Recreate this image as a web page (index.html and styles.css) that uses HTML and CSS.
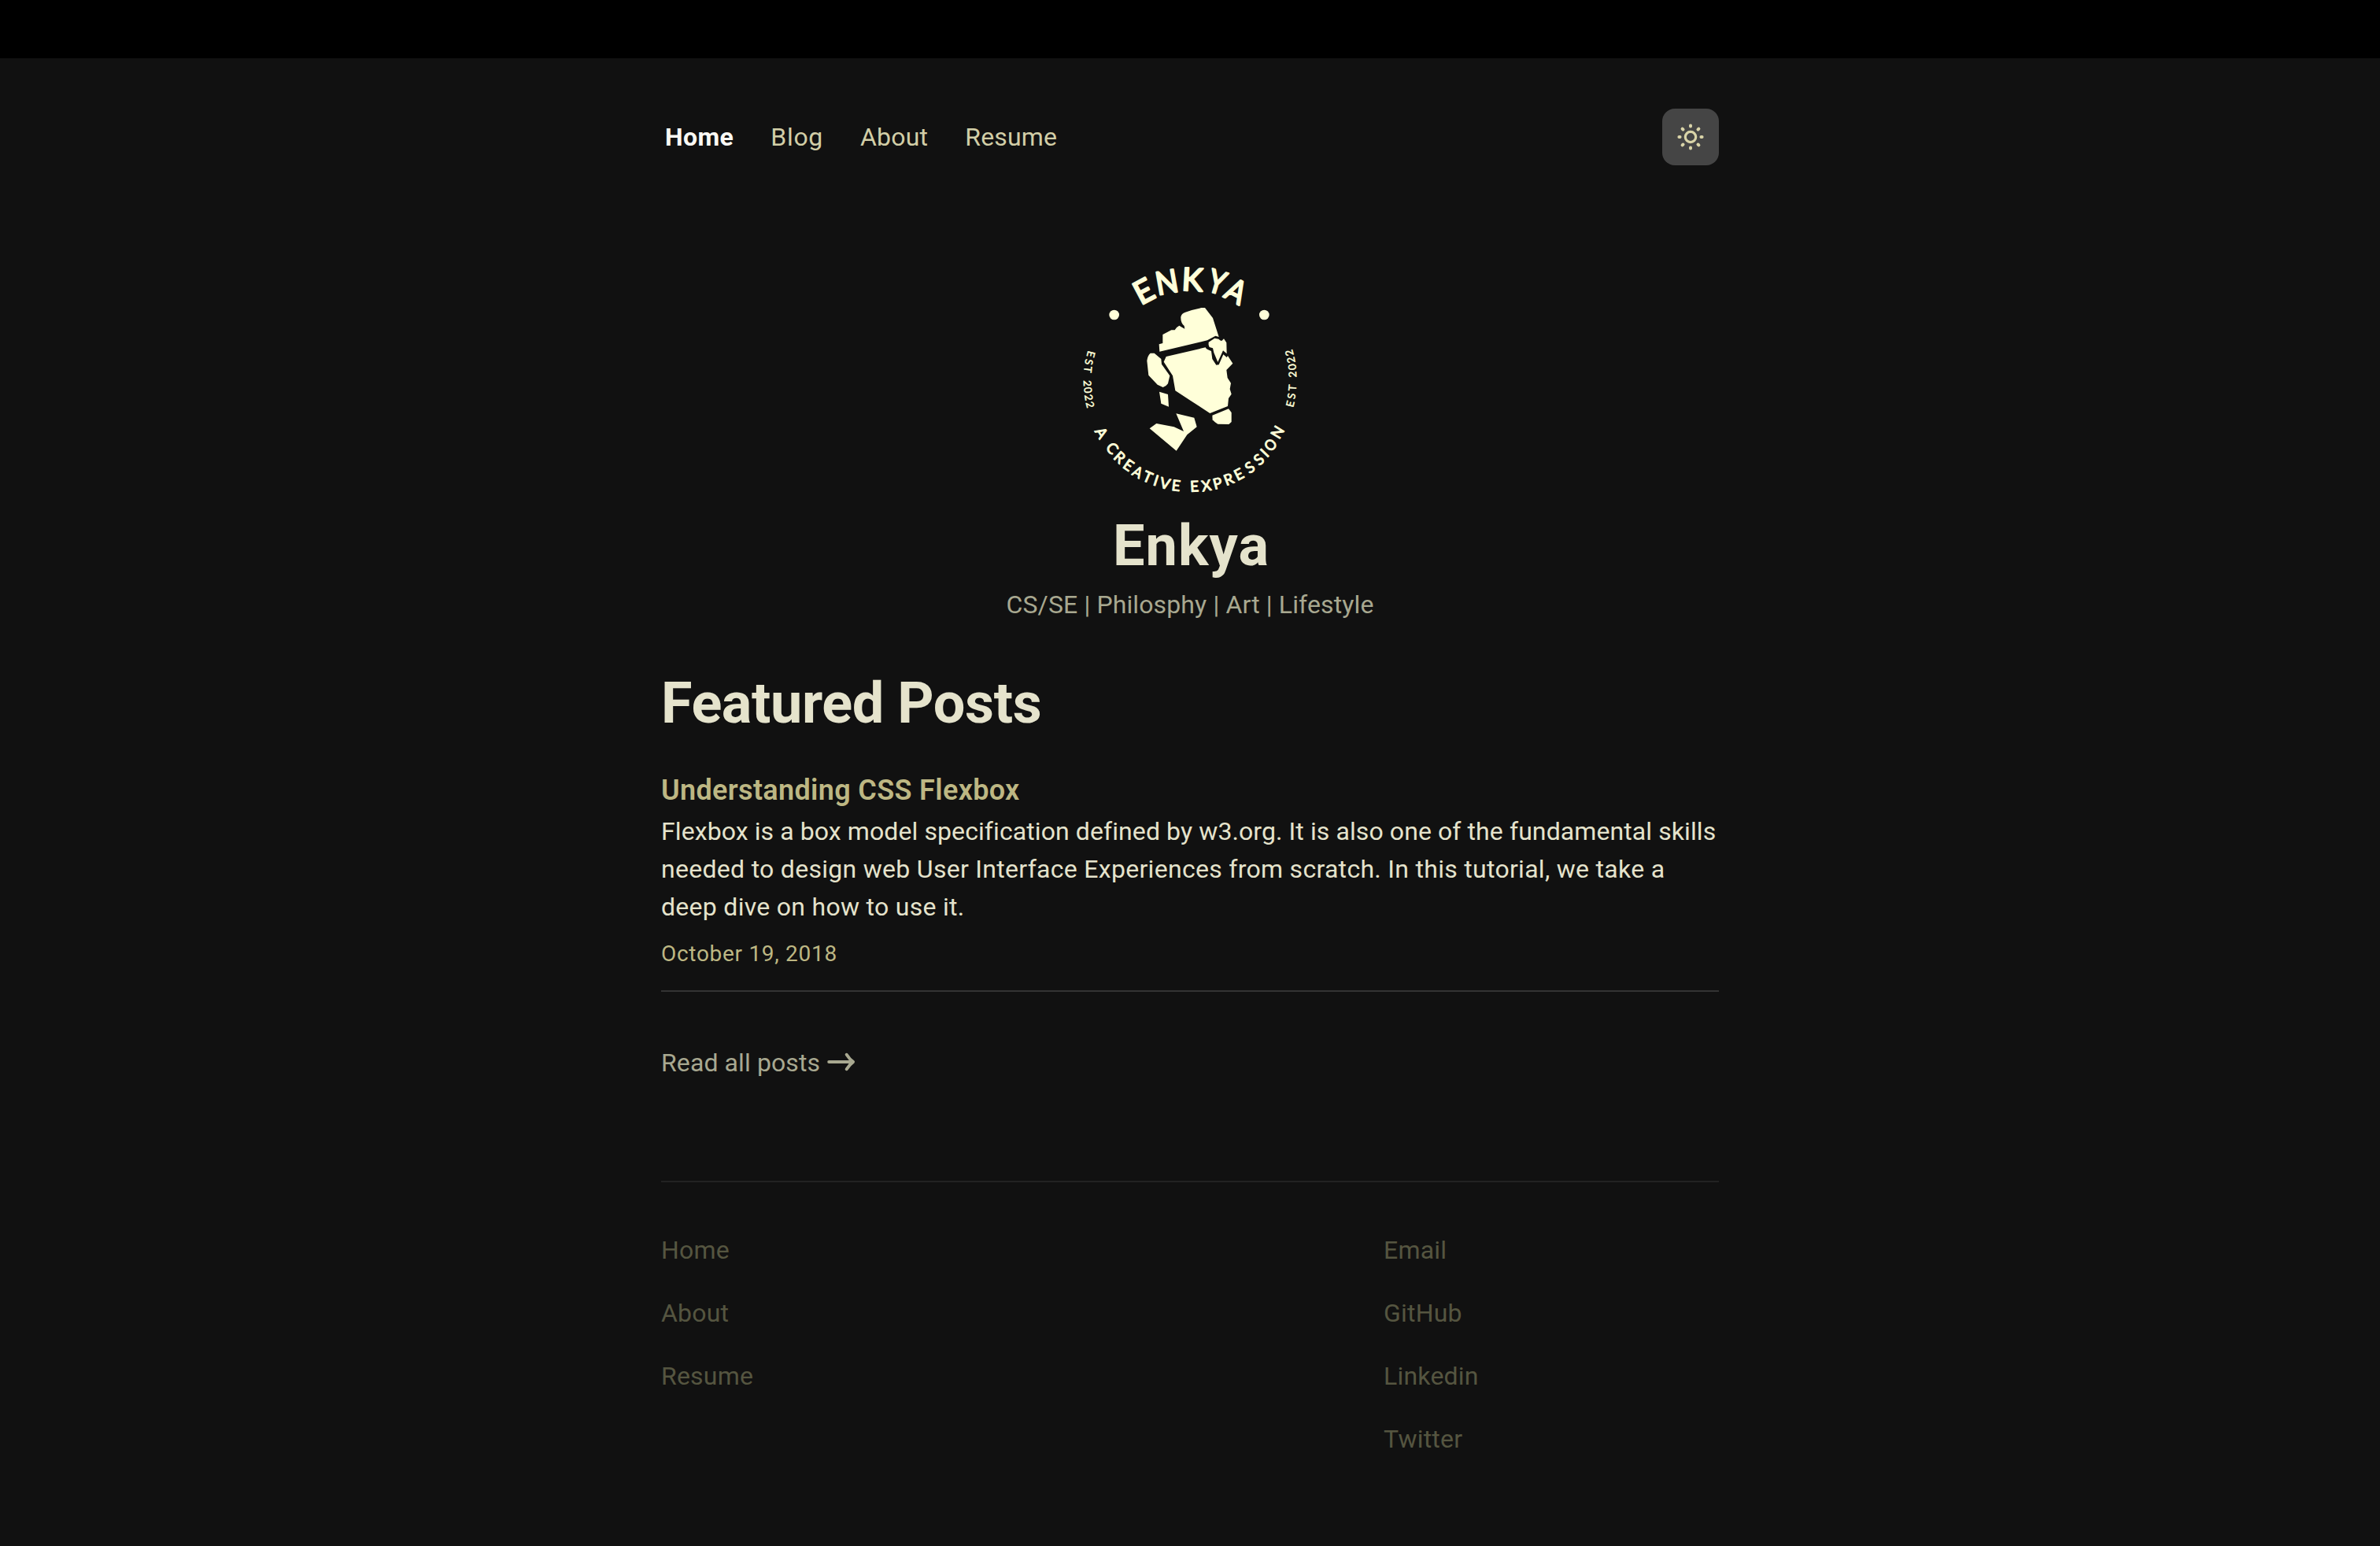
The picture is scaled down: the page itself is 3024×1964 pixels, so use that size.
FILE: index.html
```
<!DOCTYPE html>
<html lang="en">
<head>
<meta charset="utf-8">
<title>Enkya</title>
<link rel="stylesheet" href="styles.css">
</head>
<body>
<div class="topbar"></div>
<div class="page">
  <header class="header">
    <nav class="nav">
      <a class="nav-link active">Home</a>
      <a class="nav-link blog">Blog</a>
      <a class="nav-link about">About</a>
      <a class="nav-link">Resume</a>
    </nav>
    <button class="theme-toggle" aria-label="Toggle theme">
      <svg class="sun" viewBox="0 0 36 36">
        <circle cx="18" cy="18" r="6.7" stroke-width="3.2"/>
        <path d="M18 3.4v1.2M18 31.4v1.2M3.4 18h1.2M31.4 18h1.2M7.6 7.6l.9.9M27.5 27.5l.9.9M7.6 28.4l.9-.9M27.5 8.5l.9-.9" stroke-width="4" stroke-linecap="round"/>
      </svg>
    </button>
  </header>

  <main>
    <section class="hero">
      <svg class="logo" viewBox="-9 0 930 960">
        <g class="mark-name">
          <text transform="translate(279 149) rotate(-28)" dy=".36em">E</text>
          <text transform="translate(367 115) rotate(-10) scale(.92 1)" dy=".36em">N</text>
          <text transform="translate(465 105) rotate(3)" dy=".36em">K</text>
          <text transform="translate(560 114) rotate(17) scale(.86 1)" dy=".36em">Y</text>
          <text transform="translate(633 149) rotate(28) scale(.88 1)" dy=".36em">A</text>
        </g>
        <circle cx="167" cy="240" r="19"/>
        <circle cx="739" cy="240" r="19"/>
        <g class="mark-est">
          <text transform="translate(79 390) rotate(104)" dy=".36em">E</text>
          <text transform="translate(71 420) rotate(100)" dy=".36em">S</text>
          <text transform="translate(67 448) rotate(96)" dy=".36em">T</text>
          <text transform="translate(65 501) rotate(88)" dy=".36em">2</text>
          <text transform="translate(67 527) rotate(84)" dy=".36em">0</text>
          <text transform="translate(70 555) rotate(80)" dy=".36em">2</text>
          <text transform="translate(75 582) rotate(76)" dy=".36em">2</text>
          <text transform="translate(838 579) rotate(-76)" dy=".36em">E</text>
          <text transform="translate(843 549) rotate(-80)" dy=".36em">S</text>
          <text transform="translate(846 518) rotate(-85)" dy=".36em">T</text>
          <text transform="translate(847 467) rotate(-93)" dy=".36em">2</text>
          <text transform="translate(845 439) rotate(-97)" dy=".36em">0</text>
          <text transform="translate(841 412) rotate(-101)" dy=".36em">2</text>
          <text transform="translate(834 385) rotate(-105)" dy=".36em">2</text>
        </g>
        <g class="mark-motto">
          <text transform="translate(119 689) rotate(59)" dy=".36em">A</text>
          <text transform="translate(160 748) rotate(48)" dy=".36em">C</text>
          <text transform="translate(188 783) rotate(42)" dy=".36em">R</text>
          <text transform="translate(222 812) rotate(35)" dy=".36em">E</text>
          <text transform="translate(257 839) rotate(29) scale(.9 1)" dy=".36em">A</text>
          <text transform="translate(295 858) rotate(23)" dy=".36em">T</text>
          <text transform="translate(327 871) rotate(18)" dy=".36em">I</text>
          <text transform="translate(361 882) rotate(13)" dy=".36em">V</text>
          <text transform="translate(403 890) rotate(7)" dy=".36em">E</text>
          <text transform="translate(473 893) rotate(-3)" dy=".36em">E</text>
          <text transform="translate(518 890) rotate(-9)" dy=".36em">X</text>
          <text transform="translate(561 882) rotate(-15)" dy=".36em">P</text>
          <text transform="translate(603 866) rotate(-21)" dy=".36em">R</text>
          <text transform="translate(642 847) rotate(-27)" dy=".36em">E</text>
          <text transform="translate(684 821) rotate(-34)" dy=".36em">S</text>
          <text transform="translate(718 791) rotate(-41)" dy=".36em">S</text>
          <text transform="translate(740 766) rotate(-46)" dy=".36em">I</text>
          <text transform="translate(763 735) rotate(-51) scale(.9 1)" dy=".36em">O</text>
          <text transform="translate(789 687) rotate(-59)" dy=".36em">N</text>
        </g>
        <g transform="translate(210 180)">
          <path d="M130 200L128 172L142 168L142 135L175 118L188 118Q194 106 205 101Q216 108 226 113L224 102Q210 90 211 68Q213 55 228 50Q258 39 290 33L303 33L333 72L356 144L343 140L312 157Z"/>
          <path d="M95 206L110 206L136 228L138 248L169 292L162 322Q155 333 143 336L122 326L88 290L82 235Q84 216 95 206Z"/>
          <path d="M155 219L305 184Q308 192 315 193L327 198L331 228L346 251L356 250L373 211L386 222L390 216L409 245L385 270L389 300L402 320L398 343L404 362L393 378L390 408L322 435L190 349L180 292L146 239Z"/>
          <path d="M317 164L340 149L355 152Q362 159 367 159L375 151L385 166L386 208L372 196L352 240L337 204L333 187L320 183Q315 174 317 164Z"/>
          <path d="M129 353L162 363L165 410L136 398Z"/>
          <path d="M193 436L262 452L272 487L235 517L194 578L92 493L118 474L185 487L222 504Z"/>
          <path d="M331 443L393 418L404 432L404 468L394 477L352 476Q338 468 332 460Z"/>
        </g>
      </svg>
      <h1 class="name">Enkya</h1>
      <p class="tagline">CS/SE | Philosphy | Art | Lifestyle</p>
    </section>

    <section class="posts">
      <h2 class="section-title">Featured Posts</h2>
      <article class="post">
        <h3 class="post-title">Understanding CSS Flexbox</h3>
        <p class="post-summary">Flexbox is a box model specification defined by w3.org. It is also one of the fundamental skills<br>needed to design web User Interface Experiences from scratch. In this tutorial, we take a<br>deep dive on how to use it.</p>
        <time class="post-date">October 19, 2018</time>
      </article>
      <a class="read-all">Read all posts
        <svg class="arrow" viewBox="0 0 36 24"><path d="M2.2 12H33M24.7 2.8Q28.5 8.8 33 12Q28.5 15.2 24.7 21.2"/></svg>
      </a>
    </section>
  </main>

  <footer class="footer">
    <div class="footer-column">
      <a>Home</a><a>About</a><a>Resume</a>
    </div>
    <div class="footer-column">
      <a>Email</a><a>GitHub</a><a>Linkedin</a><a>Twitter</a>
    </div>
  </footer>
</div>
</body>
</html>
```
FILE: styles.css
```
* { box-sizing: border-box; margin: 0; padding: 0; }

body {
  background: #111;
  color: #e5e3cc;
  font: 400 32px/48px Roboto, "Liberation Sans", sans-serif;
}

.topbar { height: 74px; background: #000; }

.page { width: 1344px; margin: 0 auto; padding-top: 64px; }

.header { display: flex; justify-content: space-between; align-items: center; height: 72px; }

.nav { display: flex; gap: 47px; padding-left: 5px; color: #d2cea7; letter-spacing: .2px; }
.nav-link.active { color: #faf9f4; font-weight: 700; letter-spacing: .4px; }
.nav-link.blog { letter-spacing: .7px; }
.nav-link.about { letter-spacing: .2px; }

.theme-toggle {
  display: flex;
  align-items: center;
  justify-content: center;
  width: 72px;
  height: 72px;
  border: 0;
  border-radius: 16px;
  background: #454545;
}
.sun { width: 36px; height: 36px; fill: none; stroke: #d9d4a8; }

.hero { display: flex; flex-direction: column; align-items: center; padding-top: 110px; }
.logo { width: 310px; height: 320px; fill: #ffffd9; }
.logo text { font-family: Lato, sans-serif; text-anchor: middle; stroke: #ffffd9; stroke-linejoin: round; }
.mark-name { font-size: 121px; stroke-width: 7px; }
.mark-est { font-size: 40px; stroke-width: 1.5px; }
.mark-motto { font-size: 57px; stroke-width: 3px; }

.name {
  margin-top: 14px;
  padding-left: 3px;
  font-size: 72px;
  line-height: 80px;
  font-weight: 700;
  letter-spacing: 1.1px;
}
.tagline { margin-top: 10px; color: #a8a890; letter-spacing: .12px; }

.posts { display: flex; flex-direction: column; padding-top: 62px; }
.section-title { font-size: 72px; line-height: 80px; font-weight: 700; letter-spacing: -.4px; }

.post { display: flex; flex-direction: column; margin-top: 46px; padding-bottom: 26px; border-bottom: 2px solid #333; }
.post-title { color: #bdb783; font-size: 36px; line-height: 48px; font-weight: 600; letter-spacing: .34px; }
.post-summary { margin-top: 4px; letter-spacing: .29px; white-space: nowrap; }
.post-summary::first-line { letter-spacing: .09px; }
.post-date { margin-top: 16px; color: #bdb783; font-size: 28px; line-height: 40px; letter-spacing: .7px; }

.read-all { display: flex; align-items: center; gap: 9px; margin-top: 66px; color: #a8a890; letter-spacing: .1px; }
.arrow { width: 36px; height: 24px; margin-top: -3px; fill: none; stroke: #a8a890; stroke-width: 4; stroke-linecap: round; stroke-linejoin: round; }

.footer {
  display: grid;
  grid-template-columns: 918px 1fr;
  margin-top: 126px;
  padding-top: 62px;
  border-top: 2px solid #222;
  color: #555540;
  letter-spacing: .2px;
}
.footer-column { display: flex; flex-direction: column; gap: 32px; }
```
